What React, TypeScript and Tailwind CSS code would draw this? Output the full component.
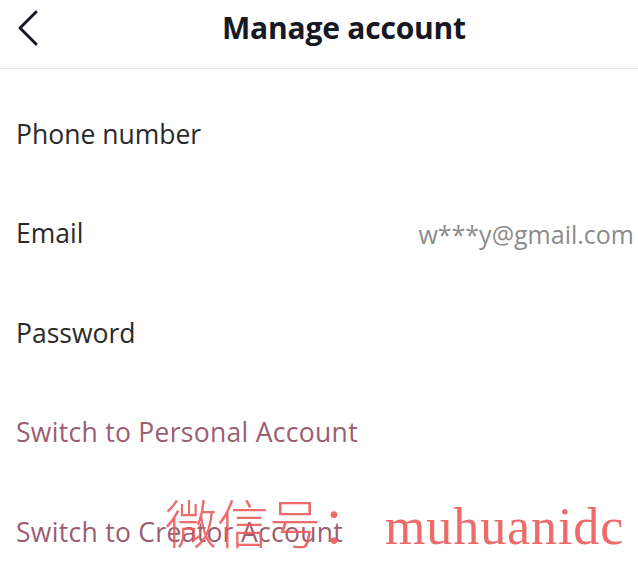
import React from "react";

const rows = [
  { label: "Phone number", value: "" },
  { label: "Email", value: "w***y@gmail.com" },
  { label: "Password", value: "" },
];

const actions = ["Switch to Personal Account", "Switch to Creator Account"];

const App: React.FC = () => {
  return (
    <div
      className="relative w-[638px] h-[566px] bg-white overflow-hidden"
      style={{ fontFamily: '"Open Sans", "Noto Sans", sans-serif' }}
    >
      <div className="flex items-start h-[69px] border-b border-[#e3e3e3] px-[14px] pt-[9px]">
        <svg width="28" height="38" viewBox="0 0 28 38" fill="none">
          <path
            d="M22 3 L6 19 L22 35"
            stroke="#161823"
            strokeWidth="3"
            strokeLinecap="round"
            strokeLinejoin="round"
          />
        </svg>
        <h1 className="flex-1 text-center pl-[50px] text-[30px] leading-[38px] font-bold text-[#161823] tracking-[-0.2px]">
          Manage account
        </h1>
        <div className="w-[28px]" />
      </div>

      <div className="flex flex-col pt-[16px]">
        {rows.map((row) => (
          <div
            key={row.label}
            className="flex items-center justify-between h-[99.5px] pl-[16px] pr-[4px]"
          >
            <span className="text-[26.5px] text-[#2a2a2a]">{row.label}</span>
            {row.value && (
              <span className="text-[25px] text-[#8c8c8c]">{row.value}</span>
            )}
          </div>
        ))}
        {actions.map((a) => (
          <div key={a} className="flex items-center h-[99.5px] pl-[16px]">
            <span className="text-[26.5px] text-[#9c5d71] tracking-[0.3px]">{a}</span>
          </div>
        ))}
      </div>

      <div
        className="absolute left-[165px] top-[501px] flex items-end text-[#ea5b5b] opacity-90"
        style={{ fontFamily: '"Liberation Serif", "Noto Sans CJK SC", serif' }}
      >
        <span className="text-[52px] leading-none font-light">微信号：</span>
        <span className="text-[52px] leading-none ml-[12px] tracking-[0.9px]">muhuanidc</span>
      </div>
    </div>
  );
};

export default App;
